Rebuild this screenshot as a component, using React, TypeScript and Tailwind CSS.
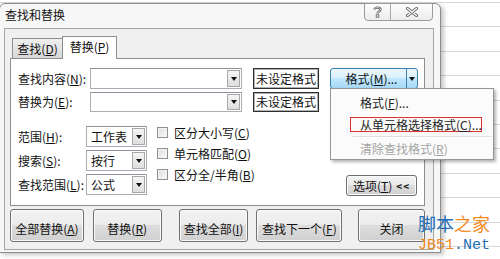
import type { ReactNode } from 'react'

function Acc({ text, k, tail = '' }: { text: string; k: string; tail?: string }) {
  return (
    <span className="whitespace-nowrap">
      {text}(<u className="underline-offset-[1px]">{k}</u>){tail}
    </span>
  )
}

function Arrow() {
  return <span className="block h-0 w-0 border-x-[3px] border-t-[4px] border-x-transparent border-t-[#111]" />
}

function Combo({ className, value }: { className: string; value?: string }) {
  return (
    <div className={`flex items-stretch border border-[#abadb3] border-t-[#8f9399] bg-white p-px ${className}`}>
      <div className="flex flex-1 items-center pl-[3px] text-[12px] leading-none text-[#111]">{value}</div>
      <div className="flex w-[13px] items-center justify-center border border-[#a7a7a7] bg-[linear-gradient(#f5f5f5,#dedede)]">
        <Arrow />
      </div>
    </div>
  )
}

function Btn({ className, children }: { className: string; children: ReactNode }) {
  return (
    <div
      className={`flex items-center justify-center rounded-[3px] border border-[#707070] bg-[linear-gradient(#f3f3f3_0%,#ebebeb_50%,#dddddd_50%,#d0d0d0_100%)] text-[12px] leading-none text-[#111] shadow-[inset_0_0_0_1px_#fbfbfb] ${className}`}
    >
      {children}
    </div>
  )
}

function Check({ children }: { children: ReactNode }) {
  return (
    <div className="flex h-[21px] items-center">
      <span className="mr-[6px] block h-[11px] w-[11px] border border-[#8e8f8f] bg-[linear-gradient(135deg,#dcdcdc,#fbfbfb)] shadow-[inset_0_0_0_1px_#f4f4f4]" />
      <span className="text-[12px] leading-none text-[#111]">{children}</span>
    </div>
  )
}

function NotSet({ className }: { className: string }) {
  return (
    <div
      className={`ml-[11px] flex w-[66px] items-center justify-center border border-[#2e2e2e] bg-white text-[12px] leading-none text-[#111] shadow-[inset_0_0_0_1px_#b0b0b0] ${className}`}
    >
      未设定格式
    </div>
  )
}

export default function App() {
  return (
    <div className="relative h-[259px] w-[500px] overflow-hidden bg-white bg-[repeating-linear-gradient(to_bottom,#d6d6d6_0px,#d6d6d6_1px,transparent_1px,transparent_24.4px)] bg-[position:0_2px] font-['Noto_Sans_CJK_SC',sans-serif]">
      {/* dialog window */}
      <div className="mt-[3px] -ml-px flex h-[250px] w-[442px] flex-col rounded-t-[6px] border border-[#8c8c8c] bg-[#f7f7f7] shadow-[3px_2px_4px_rgba(0,0,0,0.22)]">
        {/* title bar */}
        <div className="flex h-[24px] items-start">
          <div className="pl-[5px] pt-[3px] text-[12px] leading-[16px] text-[#111]">查找和替换</div>
          <div className="ml-auto mr-[7px] -mt-px flex h-[18px] overflow-hidden rounded-b-[4px] border border-[#9a9a9a] bg-[linear-gradient(#fdfdfd,#ececec)]">
            <div className="flex w-[26px] items-center justify-center border-r border-[#a8a8a8]">
              <svg width="9" height="12" viewBox="0 0 9 12">
                <path d="M1.5 3.5 C1.5 1 7.5 1 7.5 3.5 C7.5 5.5 4.5 5.5 4.5 7.5" fill="none" stroke="#555" strokeWidth="2.2" />
                <path d="M1.5 3.5 C1.5 1 7.5 1 7.5 3.5 C7.5 5.5 4.5 5.5 4.5 7.5" fill="none" stroke="#fff" strokeWidth="0.8" />
                <rect x="3.2" y="8.8" width="2.6" height="2.4" fill="#fff" stroke="#555" strokeWidth="0.8" />
              </svg>
            </div>
            <div className="flex w-[41px] items-center justify-center">
              <svg width="12" height="10" viewBox="0 0 12 10">
                <path d="M1.5 1.5 L10.5 8.5 M10.5 1.5 L1.5 8.5" fill="none" stroke="#6a6a6a" strokeWidth="3" strokeLinecap="round" />
                <path d="M1.5 1.5 L10.5 8.5 M10.5 1.5 L1.5 8.5" fill="none" stroke="#fff" strokeWidth="1.2" strokeLinecap="round" />
              </svg>
            </div>
          </div>
        </div>

        {/* client area */}
        <div className="ml-[4px] mr-[6px] flex h-[222px] flex-col border border-[#a5a5a5] bg-[#f0f0f0] pl-[5px] pr-[8px] pt-[7px]">
          {/* tabs */}
          <div className="relative z-10 flex items-end pl-[2px]">
            <div className="mb-px flex h-[20px] w-[51px] items-center justify-center border border-b-0 border-[#8e8f8f] bg-[linear-gradient(#f0f0f0,#d8d8d8)] text-[12px] leading-none text-[#111]">
              <Acc text="查找" k="D" />
            </div>
            <div className="-ml-px flex h-[23px] w-[55px] items-center justify-center border border-b-0 border-[#8e8f8f] bg-white pb-[2px] text-[12px] leading-none text-[#111]">
              <Acc text="替换" k="P" />
            </div>
          </div>

          {/* tab panel */}
          <div className="-mt-px flex h-[148px] flex-col border border-[#8e8f8f] bg-white pl-[7px] pt-[9px]">
            <div className="flex h-[21px] items-center">
              <div className="w-[72px] text-[12px] leading-none text-[#111]">
                <Acc text="查找内容" k="N" tail=":" />
              </div>
              <Combo className="h-[21px] w-[152px]" />
              <NotSet className="h-[21px]" />
              <div className="ml-[11px] flex h-[21px] w-[88px] overflow-hidden rounded-[3px] border border-[#3c7fb1] bg-[linear-gradient(#eaf6fd_0%,#d9f0fc_50%,#bee6fd_50%,#a7d9f5_100%)] text-[12px] leading-none text-[#111]">
                <div className="flex flex-1 items-center justify-center pl-[6px]">
                  <Acc text="格式" k="M" tail="..." />
                </div>
                <div className="flex w-[11px] items-center justify-center border-l border-[#3c7fb1]">
                  <Arrow />
                </div>
              </div>
            </div>
            <div className="mt-[3px] flex h-[20px] items-center">
              <div className="w-[72px] text-[12px] leading-none text-[#111]">
                <Acc text="替换为" k="E" tail=":" />
              </div>
              <Combo className="h-[20px] w-[152px]" />
              <NotSet className="h-[20px]" />
            </div>

            <div className="mt-[14px] flex">
              <div className="flex flex-col gap-[3px]">
                {[
                  ['范围', 'H', '工作表'],
                  ['搜索', 'S', '按行'],
                  ['查找范围', 'L', '公式'],
                ].map(([t, k, v]) => (
                  <div key={k} className="flex h-[21px] items-center">
                    <div className="w-[68px] text-[12px] leading-none text-[#111]">
                      <Acc text={t} k={k} tail=":" />
                    </div>
                    <Combo className="h-[21px] w-[61px]" value={v} />
                  </div>
                ))}
              </div>
              <div className="-mt-[4px] ml-[10px] flex flex-col">
                <Check>
                  <Acc text="区分大小写" k="C" />
                </Check>
                <Check>
                  <Acc text="单元格匹配" k="O" />
                </Check>
                <Check>
                  <Acc text="区分全/半角" k="B" />
                </Check>
              </div>
              <div className="ml-auto mr-[7px] self-end">
                <Btn className="mb-[-1px] h-[21px] w-[71px] gap-[4px]">
                  <Acc text="选项" k="T" />
                  <span className="text-[10px] font-bold tracking-[1px]">&lt;&lt;</span>
                </Btn>
              </div>
            </div>
          </div>

          {/* bottom buttons */}
          <div className="mt-[3px] flex">
            <Btn className="h-[33px] w-[74px] pt-[6px]">
              <Acc text="全部替换" k="A" />
            </Btn>
            <Btn className="ml-[9px] h-[33px] w-[69px] pt-[6px]">
              <Acc text="替换" k="R" />
            </Btn>
            <Btn className="ml-[17px] h-[33px] w-[70px] pt-[6px]">
              <Acc text="查找全部" k="I" />
            </Btn>
            <Btn className="ml-[8px] h-[33px] w-[86px] pt-[6px]">
              <Acc text="查找下一个" k="F" />
            </Btn>
            <Btn className="ml-[16px] h-[33px] w-[67px] pt-[6px]">关闭</Btn>
          </div>
        </div>
      </div>

      {/* dropdown menu */}
      <div className="absolute left-[330px] top-[88px] flex h-[72px] w-[164px] flex-col border border-[#979797] bg-[#fbfbfb] pt-[5px] text-[12px] leading-none shadow-[2px_2px_3px_rgba(0,0,0,0.3)]">
        <div className="flex h-[18px] items-center pl-[29px] text-[#222]">
          <Acc text="格式" k="F" tail="..." />
        </div>
        <div className="ml-[19px] mr-[11px] mt-[5px] flex h-[15px] items-center border border-[#e0302e] pl-[9px] text-[#222]">
          <Acc text="从单元格选择格式" k="C" tail="..." />
        </div>
        <div className="ml-[21px] mr-px mt-[4px] h-[2px] border-t border-b border-t-[#e0e0e0] border-b-white" />
        <div className="mt-[3px] flex h-[16px] items-center pl-[29px] text-[#a3a3a3]">
          <Acc text="清除查找格式" k="R" />
        </div>
      </div>

      {/* watermark */}
      <div className="absolute left-[418px] top-[213px] text-[18px] leading-[20px]">
        <span className="text-[#1f6fb5]">脚本</span>
        <span className="text-[#f28a1e]">之家</span>
      </div>
      <div className="absolute left-[418px] top-[238px] font-['Liberation_Mono',monospace] text-[15px] leading-[16px]">
        <span className="text-[#f28a1e]">JB51</span>
        <span className="text-[#1f6fb5]">.Net</span>
      </div>
    </div>
  )
}
